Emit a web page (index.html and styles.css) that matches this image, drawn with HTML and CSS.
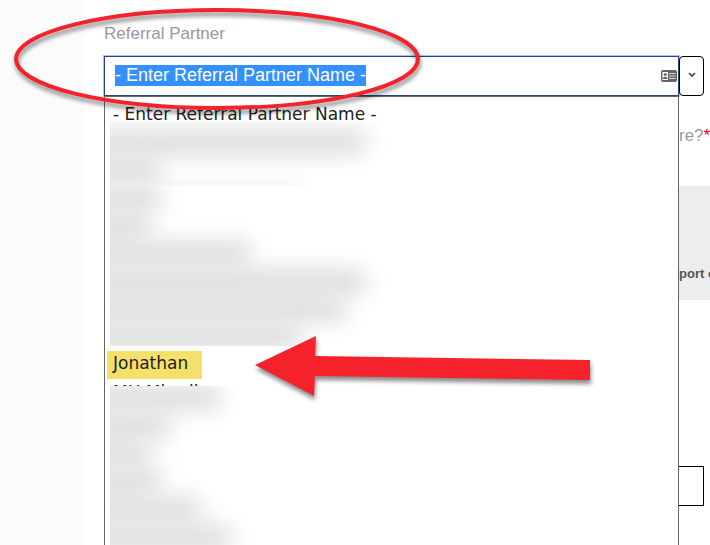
FILE: index.html
```html
<!DOCTYPE html>
<html lang="en">
<head>
    <meta charset="UTF-8">
    <meta name="viewport" content="width=device-width, initial-scale=1.0">
    <title>Referral Partner</title>
    <link rel="stylesheet" href="styles.css">
</head>
<body>
    <div class="page">
        <div class="gutter"></div>
        <main class="form">
            <label class="field-label" for="partner">Referral Partner</label>
            <div class="combo">
                <input type="text" id="partner" class="combo-input" value="- Enter Referral Partner Name -">
                <svg class="card-icon" viewBox="0 0 16 12" aria-hidden="true">
                    <rect x="0" y="0" width="16" height="12" rx="2" fill="#666"/>
                    <rect x="1.500" y="2" width="5.500" height="8" fill="#fff"/>
                    <circle cx="4.250" cy="4.500" r="1.500" fill="#666"/>
                    <path d="M2 9V8Q4.250 5.500 6.500 8V9z" fill="#666"/>
                    <path d="M8 3.500h6.500M8 6h6.500M8 8.500h6.500" stroke="#ddd" stroke-width="1.200"/>
                </svg>
                <button type="button" class="combo-toggle" aria-label="Show partners">
                    <svg viewBox="0 0 8 6" aria-hidden="true"><path d="M1 1l3 3 3-3" fill="none" stroke="#444" stroke-width="1.700"/></svg>
                </button>

                <ul class="menu">
                    <li class="option">- Enter Referral Partner Name -</li>
                    <li class="redacted redacted-top">
                        <span class="bar w-260"></span>
                        <span class="bar w-50"></span>
                        <span class="bar w-200 faint"></span>
                    </li>
                    <li class="redacted redacted-middle">
                        <span class="bar w-50"></span>
                        <span class="bar w-40"></span>
                        <span class="bar w-140"></span>
                        <span class="bar w-260"></span>
                        <span class="bar w-240"></span>
                        <span class="bar w-200"></span>
                    </li>
                    <li class="option picked"><mark>Jonathan</mark></li>
                    <li class="option cut">MH Mirrell</li>
                    <li class="redacted redacted-bottom">
                        <span class="bar w-110"></span>
                        <span class="bar w-60"></span>
                        <span class="bar w-40"></span>
                        <span class="bar w-50"></span>
                        <span class="bar w-90"></span>
                        <span class="bar w-120"></span>
                    </li>
                </ul>
            </div>

            <div class="side">
                <label class="field-label question" for="answer">re?<span class="required">*</span></label>
                <div class="panel">port o</div>
                <input type="text" id="answer" class="answer">
            </div>
        </main>

        <svg class="callouts" viewBox="0 0 710 545" aria-hidden="true">
            <ellipse cx="217" cy="59" rx="201" ry="49" fill="none" stroke="#f5222b" stroke-width="4"/>
            <path d="M255 365L316 336L315 356L590 360V380L315 376L314 396Z" fill="#f5222b"/>
        </svg>
    </div>

    <script>
        const partner = document.getElementById('partner');
        partner.focus();
        partner.select();
    </script>
</body>
</html>
```
FILE: styles.css
```css
* {
    box-sizing: border-box;
}
body {
    margin: 0;
    background: #fff;
    font-family: "Liberation Sans", Arial, sans-serif;
    overflow: hidden;
}
.page {
    position: relative;
    display: grid;
    grid-template-columns: 84px 1fr;
    min-height: 100vh;
}
.gutter {
    background: #fbfbfb;
}
.form {
    padding: 22px 0 0 20px;
    min-width: 0;
}
.field-label {
    display: block;
    font-size: 17px;
    line-height: 24px;
    color: #999;
}
.combo {
    position: relative;
    display: flex;
    margin: 10px 6px 0 0;
    height: 40px;
}
.combo-input {
    flex: 1;
    min-width: 0;
    padding: 0 40px 2px 10px;
    border: 1px solid #25467d;
    outline: 1px solid #a3c5f5;
    outline-offset: 0;
    font-family: inherit;
    font-size: 18px;
    color: #333;
}
.combo-input::selection {
    background: #3390ff;
    color: #fff;
}
.card-icon {
    position: absolute;
    right: 27px;
    top: 14px;
    width: 16px;
    height: 12px;
}
.combo-toggle {
    width: 25px;
    padding: 0 0 2px;
    border: 1px solid #000;
    border-radius: 4px;
    background: #fff;
}
.combo-toggle svg {
    display: block;
    width: 8px;
    height: 6px;
    margin: 0 auto;
}
.menu {
    position: absolute;
    top: 40px;
    left: 0;
    right: 25px;
    margin: 0;
    padding: 4px 0 0 5px;
    list-style: none;
    background: #fff;
    border: 1px solid #666;
    font-family: "DejaVu Sans", Verdana, sans-serif;
    font-size: 17px;
    color: #222;
}
.option {
    height: 20px;
    padding-left: 3px;
    line-height: 26px;
    white-space: nowrap;
}
.option mark {
    display: block;
    width: 95px;
    padding-left: 6px;
    height: 28px;
    line-height: 24px;
    background: #f4e06b;
    color: #222;
}
.picked {
    height: 33px;
    margin-left: -3px;
    padding: 5px 0 0;
}
.cut {
    height: 7px;
    overflow: hidden;
    line-height: 26px;
}

/* hidden names */
.redacted {
    overflow: hidden;
}
.redacted-top {
    height: 65px;
    padding-top: 10px;
}
.redacted-middle {
    height: 160px;
}
.redacted-bottom {
    height: 164px;
}
.bar {
    display: block;
    height: 23px;
    margin: 0 0 5px -30px;
    background: #dadada;
    filter: blur(11px);
}
.faint {
    opacity: 0.5;
}
.w-40 { width: 70px; }
.w-50 { width: 80px; }
.w-60 { width: 90px; }
.w-90 { width: 120px; }
.w-110 { width: 140px; }
.w-120 { width: 150px; }
.w-140 { width: 170px; }
.w-200 { width: 220px; }
.w-240 { width: 265px; }
.w-260 { width: 285px; }

/* right edge of the form, next to the open menu */
.side {
    width: 31px;
    margin: 28px 0 0 auto;
    overflow: hidden;
    white-space: nowrap;
}
.required {
    color: #e0002a;
}
.panel {
    margin-top: 38px;
    padding: 78px 0 16px;
    background: #ededed;
    font-size: 13px;
    font-weight: bold;
    line-height: 20px;
    color: #555;
}
.answer {
    display: block;
    width: 25px;
    height: 40px;
    margin-top: 166px;
    padding: 0;
    border: 1px solid #000;
    border-left: 0;
}
.callouts {
    position: absolute;
    top: 0;
    left: 0;
    width: 710px;
    height: 545px;
    pointer-events: none;
    filter: drop-shadow(1px 4px 2px rgba(0, 0, 0, 0.45));
}
```
